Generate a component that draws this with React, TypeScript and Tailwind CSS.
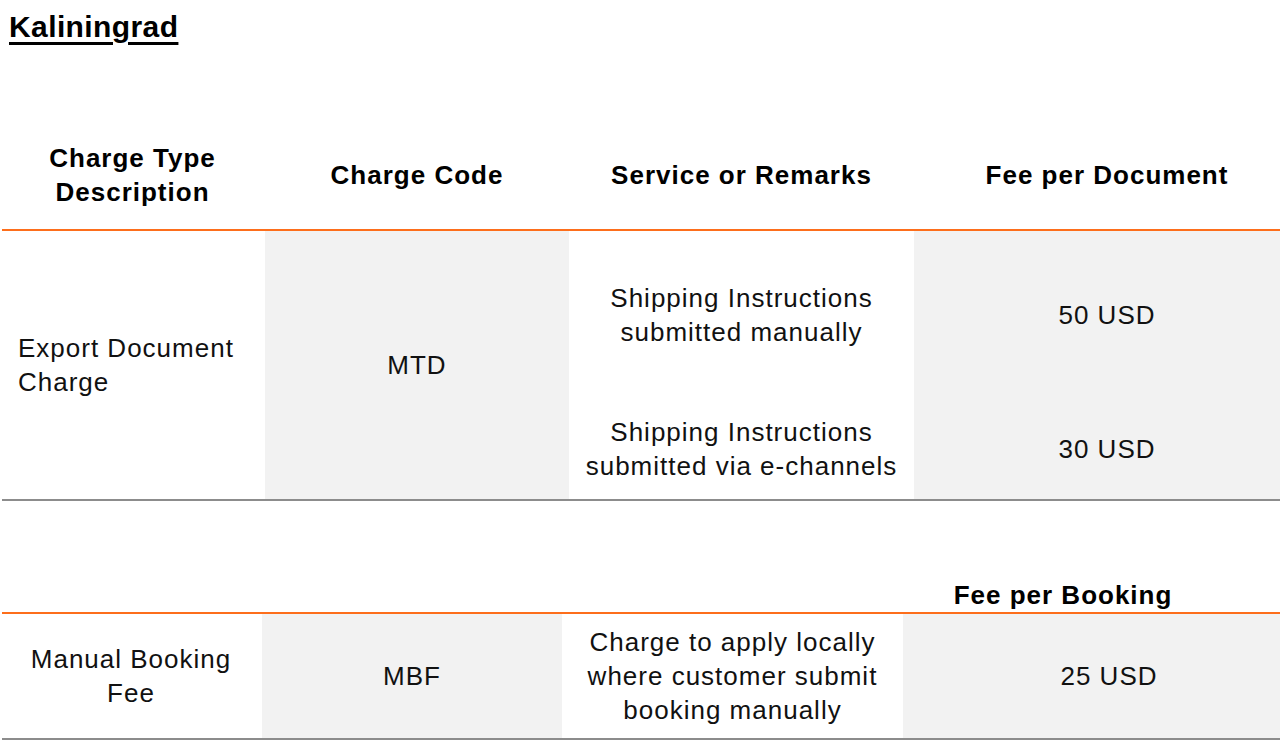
import React from "react";

const font = { fontFamily: '"Liberation Sans", Arial, sans-serif' };

export default function App() {
  return (
    <div
      className="w-[1280px] h-[746px] overflow-hidden bg-white flex flex-col text-[#111] text-[26px] leading-[34px] tracking-[1px]"
      style={font}
    >
      {/* Title */}
      <div className="pt-[10px] pl-[9px]">
        <span className="text-[30px] leading-[34px] font-bold tracking-[0.4px] text-black underline decoration-[3px] underline-offset-[5px]">
          Kaliningrad
        </span>
      </div>

      {/* Header row block 1 */}
      <div className="mt-[76px] grid grid-cols-[265px_304px_345px_1fr] h-[108px] items-center font-bold text-black text-center">
        <div>
          Charge Type
          <br />
          Description
        </div>
        <div>Charge Code</div>
        <div>Service or Remarks</div>
        <div className="pl-[20px]">Fee per Document</div>
      </div>
      <div className="ml-[2px] h-[2px] bg-[#fd6e1b]" />

      {/* Body block 1 */}
      <div className="grid grid-cols-[265px_304px_345px_1fr] h-[268px]">
        <div className="flex items-center pl-[18px]">
          <div>
            Export Document
            <br />
            Charge
          </div>
        </div>
        <div className="bg-[#f2f2f2] flex items-center justify-center">MTD</div>
        <div className="flex flex-col text-center">
          <div className="h-[168px] flex items-center justify-center">
            <div>
              Shipping Instructions
              <br />
              submitted manually
            </div>
          </div>
          <div className="flex-1 flex items-center justify-center">
            <div>
              Shipping Instructions
              <br />
              submitted via e-channels
            </div>
          </div>
        </div>
        <div className="bg-[#f2f2f2] flex flex-col text-center pl-[20px]">
          <div className="h-[168px] flex items-center justify-center">50 USD</div>
          <div className="flex-1 flex items-center justify-center">30 USD</div>
        </div>
      </div>
      <div className="ml-[2px] h-[2px] bg-[#8c8c8c]" />

      {/* Header row block 2 */}
      <div className="grid grid-cols-[262px_300px_341px_1fr] h-[111px] items-end font-bold text-black text-center">
        <div />
        <div />
        <div />
        <div className="pr-[57px]">Fee per Booking</div>
      </div>
      <div className="ml-[2px] h-[2px] bg-[#fd6e1b]" />

      {/* Body block 2 */}
      <div className="grid grid-cols-[262px_300px_341px_1fr] h-[124px] text-center">
        <div className="flex items-center justify-center">
          <div>
            Manual Booking
            <br />
            Fee
          </div>
        </div>
        <div className="bg-[#f2f2f2] flex items-center justify-center">MBF</div>
        <div className="flex items-center justify-center">
          <div>
            Charge to apply locally
            <br />
            where customer submit
            <br />
            booking manually
          </div>
        </div>
        <div className="bg-[#f2f2f2] flex items-center justify-center pl-[35px]">25 USD</div>
      </div>
      <div className="ml-[2px] h-[2px] bg-[#8c8c8c]" />
    </div>
  );
}
